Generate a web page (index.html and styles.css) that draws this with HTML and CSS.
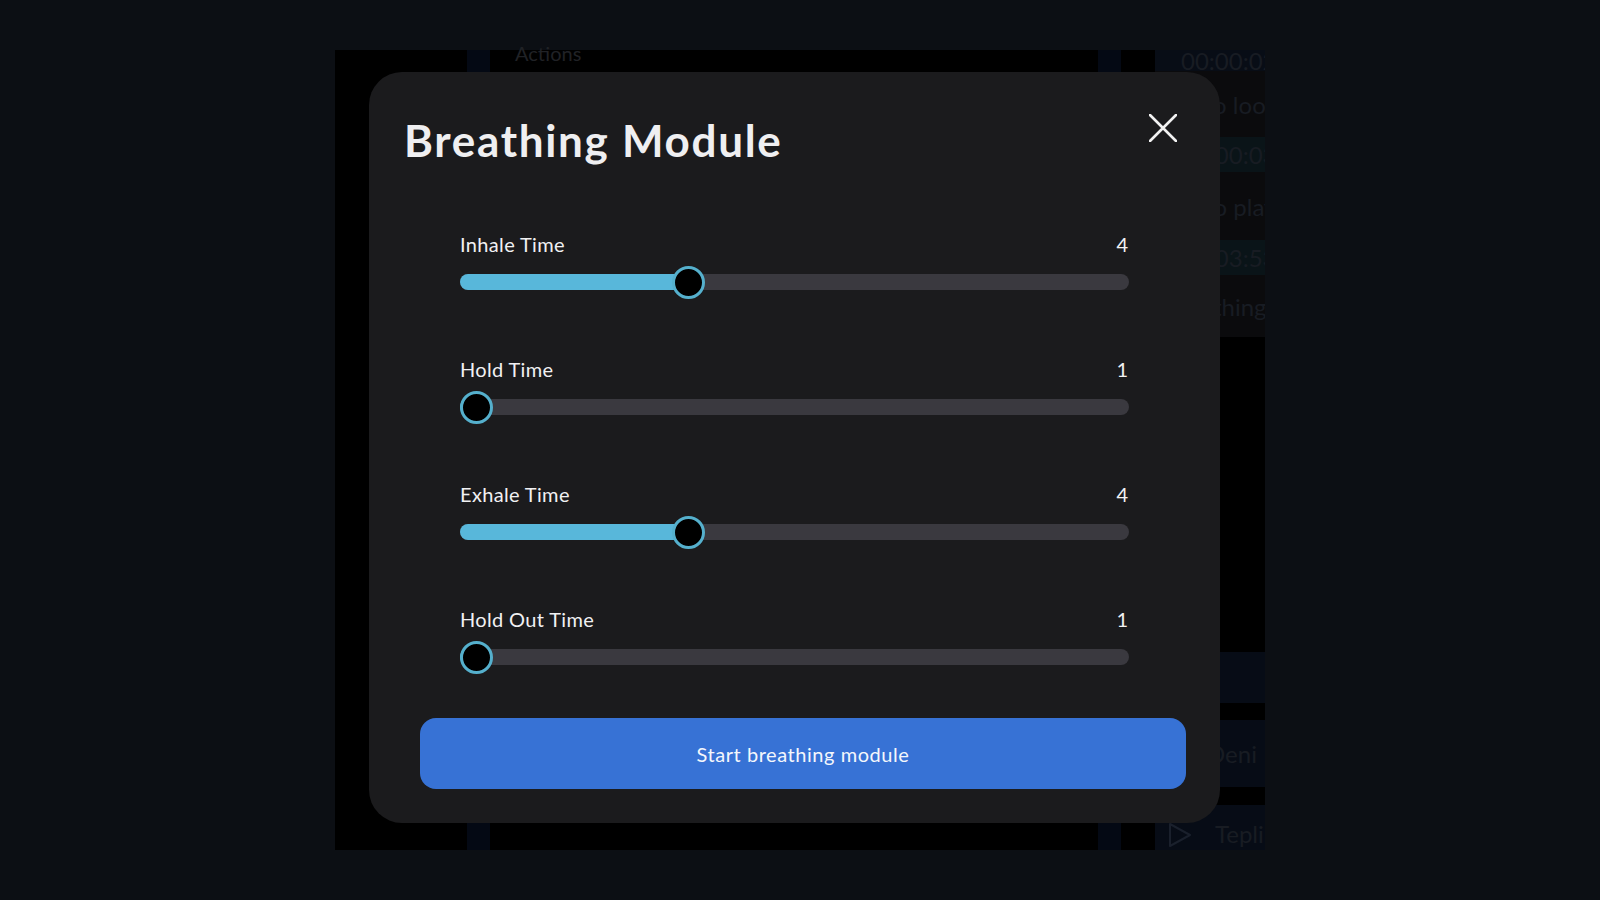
FILE: index.html
```html
<!DOCTYPE html>
<html lang="en">
<head>
<meta charset="utf-8">
<title>Breathing Module</title>
<link rel="stylesheet" href="styles.css">
</head>
<body>
<div class="app">
  <div class="sidebar"></div>
  <div class="rail"></div>
  <div class="main"><div class="main-head">Actions</div></div>
  <div class="rail"></div>
  <div class="gap"></div>
  <div class="list">
    <div class="row r-time r-h21">00:00:02</div>
    <div class="row r-dark r-h66">Video loop</div>
    <div class="row r-teal r-h35">00:00:03</div>
    <div class="row r-dark r-h68">Audio play</div>
    <div class="row r-teal r-h35">00:03:53</div>
    <div class="row r-dark r-h62">Breathing m</div>
    <div class="row r-empty r-fill"></div>
    <div class="row r-blue r-h51"></div>
    <div class="row r-sep r-h17"></div>
    <div class="row r-blue r-h67"><span class="ico"></span>Deni</div>
    <div class="row r-sep r-h18"></div>
    <div class="row r-blue r-h45 r-last"><svg class="play" viewBox="0 0 26 26" width="26" height="26"><path d="M3 2 L23 13 L3 24 Z" fill="none" stroke="#1a202c" stroke-width="2" stroke-linejoin="round"/></svg>Tepli</div>
  </div>
</div>

<div class="modal">
  <div class="modal-head">
    <h1 class="modal-title">Breathing Module</h1>
    <button class="close" aria-label="Close">
      <svg viewBox="0 0 28 28" width="28" height="28"><path d="M1 1 L27 27 M27 1 L1 27" stroke="#f2f2f2" stroke-width="2.6" stroke-linecap="round"/></svg>
    </button>
  </div>

  <div class="sliders">
    <div class="slider">
      <div class="slider-top"><span class="label">Inhale Time</span><span class="value">4</span></div>
      <div class="track"><div class="fill" style="width:228px"></div><div class="thumb" style="left:228px"></div></div>
    </div>
    <div class="slider">
      <div class="slider-top"><span class="label">Hold Time</span><span class="value">1</span></div>
      <div class="track"><div class="fill" style="width:16px"></div><div class="thumb" style="left:16px"></div></div>
    </div>
    <div class="slider">
      <div class="slider-top"><span class="label">Exhale Time</span><span class="value">4</span></div>
      <div class="track"><div class="fill" style="width:228px"></div><div class="thumb" style="left:228px"></div></div>
    </div>
    <div class="slider">
      <div class="slider-top"><span class="label">Hold Out Time</span><span class="value">1</span></div>
      <div class="track"><div class="fill" style="width:16px"></div><div class="thumb" style="left:16px"></div></div>
    </div>
  </div>

  <button class="start">Start breathing module</button>
</div>
</body>
</html>
```

FILE: styles.css
```css
* { box-sizing: border-box; }
html, body { margin: 0; padding: 0; }
body {
  width: 1600px;
  height: 900px;
  background: #0c0f14;
  font-family: "Lato", "Noto Sans", sans-serif;
  overflow: hidden;
  position: relative;
  padding-top: 50px;
  padding-left: 335px;
}

/* background app */
.app {
  width: 930px;
  height: 800px;
  background: #000;
  display: flex;
}
.sidebar { width: 132px; }
.rail { width: 23px; background: #040914; }
.main { width: 608px; }
.main-head {
  margin-top: -8px;
  padding-left: 25px;
  font-size: 20px;
  line-height: 22px;
  color: #202226;
}
.gap { width: 34px; }
.list {
  width: 110px;
  display: flex;
  flex-direction: column;
  overflow: hidden;
}
.row {
  display: flex;
  align-items: center;
  padding-left: 22px;
  white-space: nowrap;
  font-size: 24px;
  color: #181c23;
  flex-shrink: 0;
}
.r-time { background: #080d16; padding-left: 26px; }
.r-dark { background: #0b0b0d; padding-left: 10px; }
.r-teal { background: #0a1418; padding-left: 26px; }
.r-empty { background: #000; }
.r-blue { background: #070c16; padding-left: 12px; }
.r-sep { background: #000; }
.r-last { align-items: flex-start; padding-top: 14px; }
.r-h21 { height: 21px; }
.r-h66 { height: 66px; }
.r-h35 { height: 35px; }
.r-h68 { height: 68px; }
.r-h62 { height: 62px; }
.r-fill { height: 315px; }
.r-h51 { height: 51px; }
.r-h17 { height: 17px; }
.r-h67 { height: 67px; }
.r-h18 { height: 18px; }
.r-h45 { height: 45px; }
.ico { width: 26px; height: 26px; margin-right: 14px; }
.play { margin-right: 22px; margin-top: 3px; }

/* modal */
.modal {
  position: absolute;
  left: 369px;
  top: 72px;
  width: 851px;
  height: 751px;
  background: #1b1b1d;
  border-radius: 33px;
  padding: 42px 34px 34px 34px;
  display: flex;
  flex-direction: column;
}
.modal-head {
  display: flex;
  justify-content: space-between;
  align-items: flex-start;
  height: 52px;
}
.modal-title {
  margin: 0;
  padding-left: 1px;
  font-size: 44px;
  line-height: 52px;
  font-weight: 700;
  color: #efeff1;
  letter-spacing: 1.7px;
}
.close {
  width: 28px;
  height: 28px;
  margin-right: 9px;
  padding: 0;
  border: 0;
  background: transparent;
  display: flex;
}

.sliders {
  margin: 66px 57px 0 57px;
  display: flex;
  flex-direction: column;
  gap: 67px;
}
.slider {
  display: flex;
  flex-direction: column;
  gap: 18px;
}
.slider-top {
  display: flex;
  justify-content: space-between;
  height: 24px;
  line-height: 24px;
  font-size: 20px;
  color: #f1f1f3;
}
.label { letter-spacing: 0.35px; }
.value { padding-right: 1px; }
.track {
  position: relative;
  height: 16px;
  border-radius: 8px;
  background: #3a393f;
}
.fill {
  height: 16px;
  border-radius: 8px;
  background: #58b7da;
}
.thumb {
  position: absolute;
  top: 50%;
  width: 33px;
  height: 33px;
  margin-left: -16.5px;
  margin-top: -16.5px;
  border-radius: 50%;
  background: #000;
  border: 3px solid #55b0cd;
}

.start {
  margin: 53px 0 0 17px;
  height: 71px;
  border: 0;
  border-radius: 16px;
  background: #3772d5;
  color: #f4f7fc;
  font-family: "Lato", "Noto Sans", sans-serif;
  font-size: 20px;
  letter-spacing: 0.55px;
  display: flex;
  align-items: center;
  justify-content: center;
  padding: 0;
}
```
